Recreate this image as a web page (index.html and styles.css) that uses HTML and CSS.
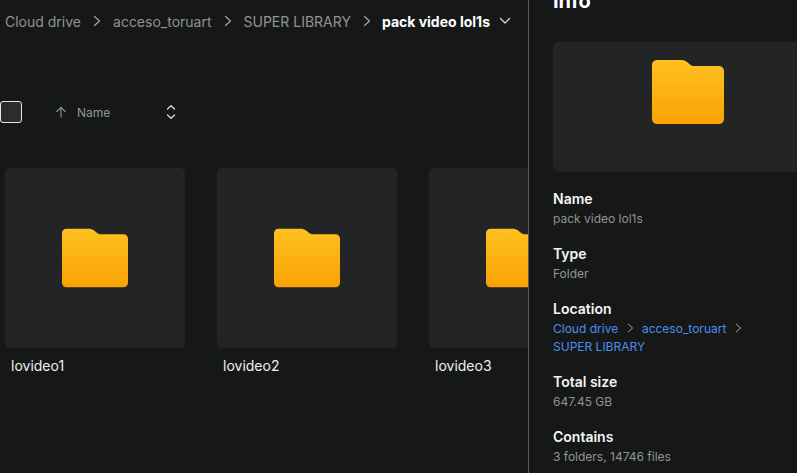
FILE: index.html
```html
<!DOCTYPE html>
<html lang="en">
<head>
  <meta charset="UTF-8" />
  <meta name="viewport" content="width=device-width, initial-scale=1" />
  <title>Cloud drive</title>
  <link rel="stylesheet" href="styles.css">
</head>
<body>
  <svg class="defs" width="0" height="0" aria-hidden="true">
    <defs>
      <linearGradient id="folderFill" x1="0" y1="0" x2="0" y2="1">
        <stop offset="0" stop-color="#ffc121" />
        <stop offset="1" stop-color="#f9a204" />
      </linearGradient>
      <symbol id="folder" viewBox="0 0 72 64">
        <path fill="url(#folderFill)" d="M5 0H29C31.5 0 33 .6 35 2L38 4.4C39.4 5.500 40.500 6 42.500 6H67C69.800 6 72 8.200 72 11V59C72 61.800 69.800 64 67 64H5C2.200 64 0 61.800 0 59V5C0 2.200 2.200 0 5 0Z" />
      </symbol>
      <symbol id="chev" viewBox="0 0 8 12">
        <path d="M1.500 1.500L6.500 6L1.500 10.500" fill="none" stroke="currentColor" stroke-width="1.200" stroke-linecap="round" stroke-linejoin="round" />
      </symbol>
    </defs>
  </svg>

  <main class="browser">
    <nav class="crumbs">
      <span class="crumb">Cloud drive</span>
      <svg class="chev"><use href="#chev" /></svg>
      <span class="crumb">acceso_toruart</span>
      <svg class="chev"><use href="#chev" /></svg>
      <span class="crumb">SUPER LIBRARY</span>
      <svg class="chev"><use href="#chev" /></svg>
      <span class="crumb current">pack video lol1s</span>
      <svg class="caret" viewBox="0 0 12 8"><path d="M1.500 1.500L6 6L10.500 1.500" fill="none" stroke="currentColor" stroke-width="1.300" stroke-linecap="round" stroke-linejoin="round" /></svg>
    </nav>

    <div class="sortbar">
      <span class="checkbox"></span>
      <svg class="arrow" viewBox="0 0 12 12"><path d="M6 11V1.500M1.800 5.500L6 1.300L10.200 5.500" fill="none" stroke="currentColor" stroke-width="1.100" stroke-linecap="round" stroke-linejoin="round" /></svg>
      <span class="sort-name">Name</span>
      <svg class="updown" viewBox="0 0 10 16"><path d="M1.500 5L5 1.700L8.500 5M1.500 11L5 14.300L8.500 11" fill="none" stroke="currentColor" stroke-width="1.400" stroke-linecap="round" stroke-linejoin="round" /></svg>
    </div>

    <section class="grid">
      <div class="item">
        <div class="thumb"><svg class="folder"><use href="#folder" /></svg></div>
        <div class="item-name">lovideo1</div>
      </div>
      <div class="item">
        <div class="thumb"><svg class="folder"><use href="#folder" /></svg></div>
        <div class="item-name">lovideo2</div>
      </div>
      <div class="item">
        <div class="thumb"><svg class="folder"><use href="#folder" /></svg></div>
        <div class="item-name">lovideo3</div>
      </div>
    </section>
  </main>

  <aside class="info">
    <h2>Info</h2>
    <div class="preview"><svg class="folder-lg"><use href="#folder" /></svg></div>

    <div class="field">
      <h4>Name</h4>
      <p>pack video lol1s</p>
    </div>
    <div class="field">
      <h4>Type</h4>
      <p>Folder</p>
    </div>
    <div class="field">
      <h4>Location</h4>
      <p class="path">
        <a href="#">Cloud drive</a>
        <svg class="chev-sm"><use href="#chev" /></svg>
        <a href="#">acceso_toruart</a>
        <svg class="chev-sm"><use href="#chev" /></svg>
        <a href="#">SUPER LIBRARY</a>
      </p>
    </div>
    <div class="field">
      <h4>Total size</h4>
      <p>647.45 GB</p>
    </div>
    <div class="field">
      <h4>Contains</h4>
      <p>3 folders, 14746 files</p>
    </div>
  </aside>
</body>
</html>
```

FILE: styles.css
```css
html, body {
  margin: 0; padding: 0; height: 100%; overflow: hidden;
  background: #161818; color: #f3f4f4;
  font-family: Inter, "Liberation Sans", sans-serif;
}
body { display: flex; }
.defs { display: block; position: absolute; }

.browser {
  width: 528px; flex: none; overflow: hidden;
  border-right: 1px solid #5c5e5e;
}

/* breadcrumb */
.crumbs {
  display: flex; align-items: center;
  height: 42px; padding-left: 5px;
  font-size: 14px; white-space: nowrap;
}
.crumb { color: #919393; }
.crumb.current { color: #fff; font-weight: 700; margin-left: -1px; }
.chev { width: 8px; height: 12px; margin: 0 12px; color: #a5a7a7; }
.caret { width: 12px; height: 8px; margin-left: 9px; color: #d8d8d8; }

/* sort row */
.sortbar {
  display: flex; align-items: center;
  height: 22px; margin-top: 59px;
}
.checkbox {
  width: 20px; height: 20px; flex: none;
  background: #2a2c2e; border: 1px solid #e6e6e6; border-radius: 3px;
}
.arrow { width: 12px; height: 12px; margin-left: 33px; color: #8f9ba0; }
.sort-name { margin-left: 10px; width: 89px; font-size: 12px; color: #8f9799; }
.updown { width: 10px; height: 16px; color: #d6d6d6; }

/* folders */
.grid {
  display: flex; gap: 32px;
  margin-top: 45px; padding-left: 5px;
}
.item { width: 180px; flex: none; }
.thumb {
  height: 180px; border-radius: 5px; background: #222426;
  display: flex; align-items: center; justify-content: center;
}
.folder { width: 66px; height: 60px; }
.item-name {
  padding: 9px 6px 0; font-size: 14px; line-height: 18px; color: #eef0f2;
}

/* info panel */
.info { flex: 1; min-width: 0; padding-left: 24px; overflow: hidden; }
.info h2 {
  margin: -8px 0 0; height: 18px; line-height: 18px;
  font-size: 20px; font-weight: 700; color: #fff;
}
.preview {
  width: 270px; height: 112px; padding-top: 18px;
  margin-top: 32px; margin-bottom: 16px;
  border-radius: 6px; background: #222426;
  display: flex; align-items: flex-start; justify-content: center;
}
.folder-lg { width: 72px; height: 64px; }

.field { margin-bottom: 15px; }
.field h4 {
  margin: 0; font-size: 14px; line-height: 21px; font-weight: 600; color: #f5f5f5;
}
.field p {
  margin: 0; padding-top: 1px; font-size: 12px; line-height: 18px; color: #929494;
}
.path { width: 220px; }
.path a { color: #4c8df0; text-decoration: none; }
.chev-sm { width: 7px; height: 10px; margin: 0 5px; color: #a5a7a7; }
```
